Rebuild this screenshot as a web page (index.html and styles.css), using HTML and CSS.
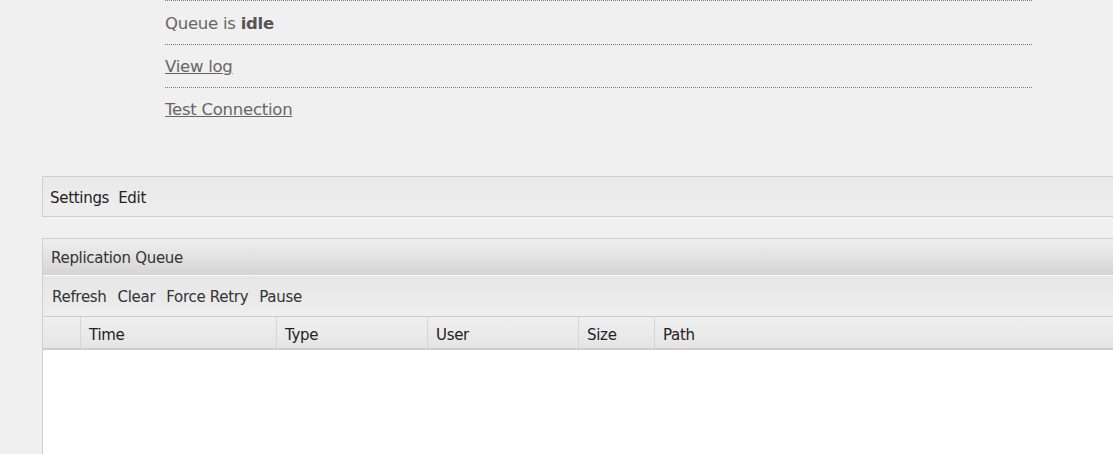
FILE: index.html
```html
<!DOCTYPE html>
<html>
<head>
<meta charset="utf-8">
<link rel="stylesheet" href="styles.css">
</head>
<body>
<div class="page">
  <ul class="status">
    <li class="status-item first">Queue is <b>idle</b></li>
    <li class="status-item"><a href="#">View log</a></li>
    <li class="status-item last"><a href="#">Test Connection</a></li>
  </ul>

  <div class="panel settings">
    <div class="toolbar settings-bar">
      <span class="btn">Settings</span>
      <span class="btn">Edit</span>
    </div>
  </div>

  <div class="panel queue">
    <div class="panel-title">Replication Queue</div>
    <div class="toolbar queue-bar">
      <span class="btn">Refresh</span>
      <span class="btn">Clear</span>
      <span class="btn">Force Retry</span>
      <span class="btn">Pause</span>
    </div>
    <div class="grid-head">
      <div class="col c0"></div>
      <div class="col c1">Time</div>
      <div class="col c2">Type</div>
      <div class="col c3">User</div>
      <div class="col c4">Size</div>
      <div class="col c5">Path</div>
    </div>
    <div class="grid-body"></div>
  </div>
</div>
</body>
</html>
```

FILE: styles.css
```css
html, body {
  margin: 0;
  padding: 0;
  background: #f0f0f0;
  overflow: hidden;
}
body {
  font-family: "DejaVu Sans", Tahoma, sans-serif;
  width: 1113px;
  height: 454px;
}
.page {
  display: flex;
  flex-direction: column;
}
.status {
  list-style: none;
  margin: 0 0 0 165px;
  padding: 0;
  width: 867px;
  border-top: 1px dotted #777;
}
.status-item {
  box-sizing: border-box;
  height: 43px;
  padding-top: 2px;
  line-height: 39px;
  border-bottom: 1px dotted #777;
  font-size: 16.5px;
  color: #666;
  letter-spacing: -0.25px;
}
.status-item.first {
  height: 44px;
  padding-top: 3px;
}
.status-item.last {
  height: 42px;
  border-bottom: none;
}
.status-item b {
  color: #555;
}
.status-item a {
  color: #666;
  text-decoration: underline;
}
.panel {
  margin-left: 42px;
  border: 1px solid #cfcfcf;
  border-right: none;
}
.settings {
  margin-top: 46px;
}
.toolbar {
  display: flex;
  align-items: center;
  font-size: 15px;
  letter-spacing: -0.3px;
  color: #222;
}
.settings-bar {
  box-sizing: border-box;
  height: 39px;
  padding: 3px 0 0 7px;
  gap: 9px;
  background: linear-gradient(#e9e9e9, #ececec 60%, #eeeeee);
}
.queue {
  margin-top: 21px;
  border-bottom: none;
}
.panel-title {
  box-sizing: border-box;
  height: 37px;
  padding: 2px 0 0 8px;
  line-height: 34px;
  font-size: 15px;
  letter-spacing: -0.3px;
  color: #333;
  background: linear-gradient(#efefef, #e2e2e2 50%, #d4d4d4);
  border-bottom: 1px solid #fafafa;
}
.queue-bar {
  box-sizing: border-box;
  height: 41px;
  padding: 2px 0 0 9px;
  gap: 11px;
  color: #333;
  background: linear-gradient(#e6e6e6, #ebebeb 70%, #efefef);
  border-bottom: 1px solid #cccccc;
}
.grid-head {
  display: flex;
  height: 31px;
  background: linear-gradient(#efefef, #e9e9e9 60%, #e4e4e4);
  border-bottom: 2px solid #cdcdcd;
  font-size: 15px;
  letter-spacing: -0.3px;
  color: #222;
}
.col {
  height: 31px;
  line-height: 37px;
  padding-left: 8px;
  box-sizing: border-box;
  border-left: 1px solid #d6d6d6;
}
.c0 { width: 37px; border-left: none; }
.c1 { width: 196px; }
.c2 { width: 151px; }
.c3 { width: 151px; }
.c4 { width: 76px; }
.c5 { flex: 1; }
.grid-body {
  height: 120px;
  background: #ffffff;
}
```
